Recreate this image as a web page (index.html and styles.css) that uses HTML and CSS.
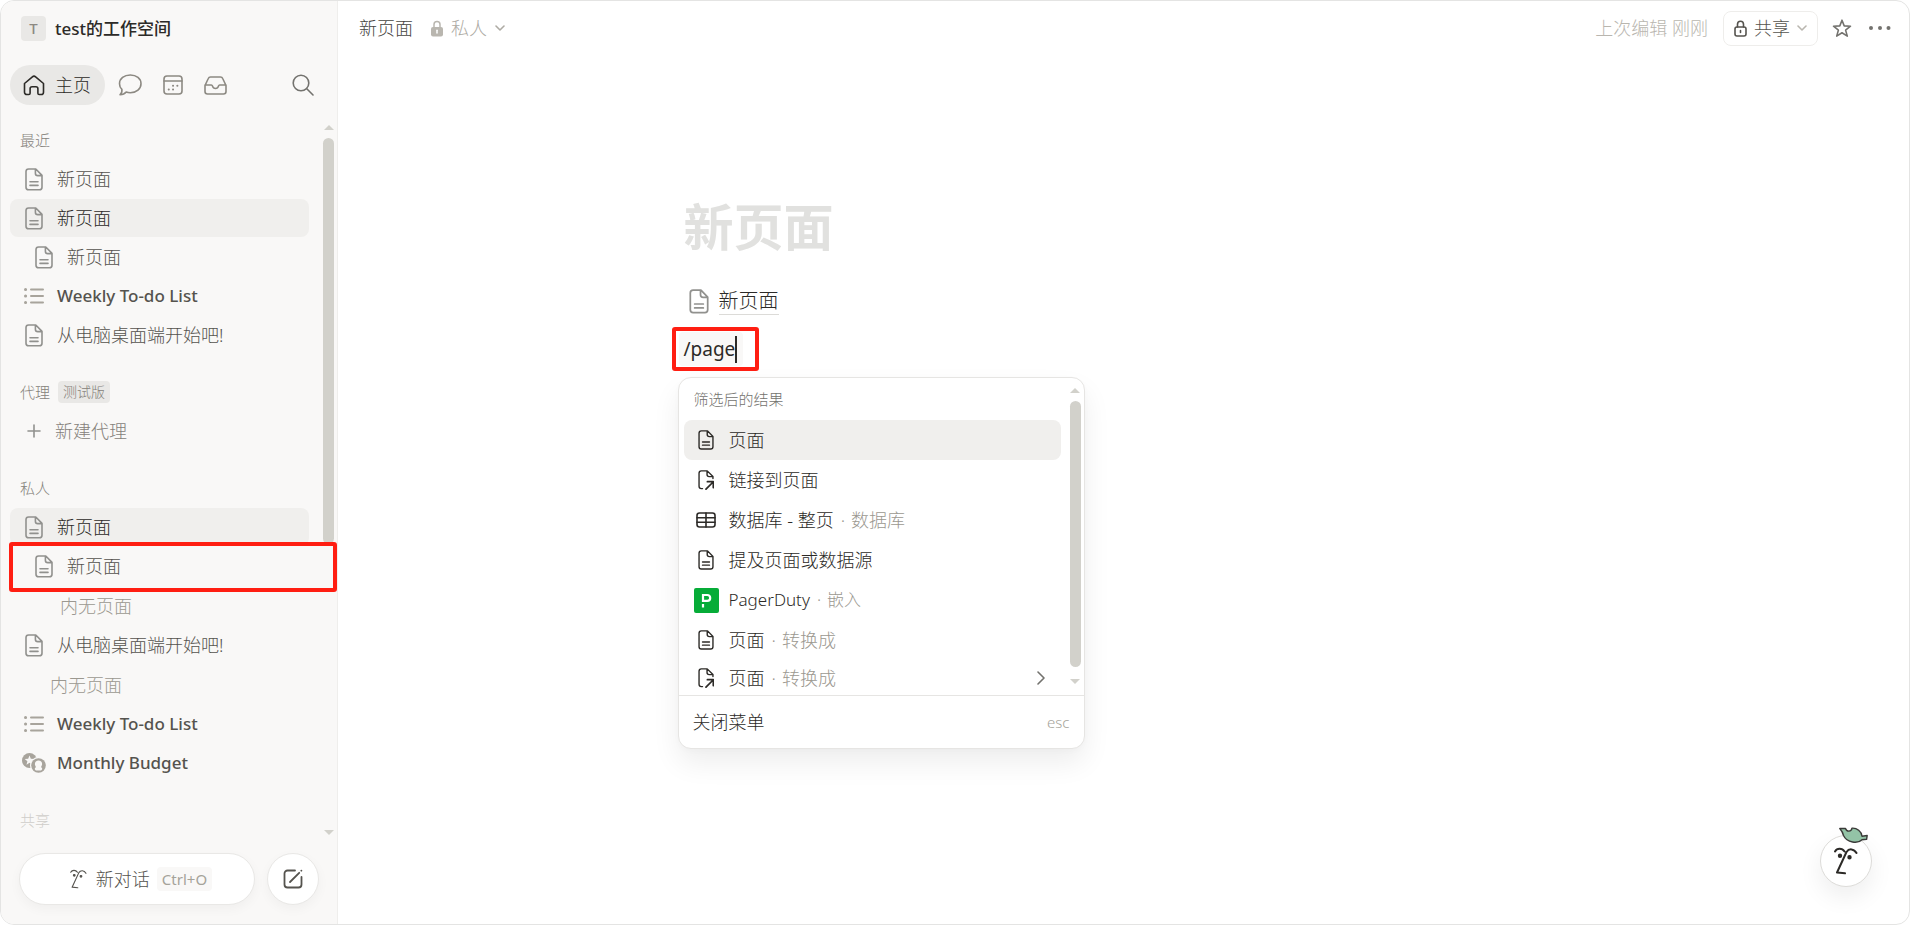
FILE: index.html
```html
<!DOCTYPE html>
<html lang="zh-CN">
<head>
    <meta charset="UTF-8">
    <meta name="viewport" content="width=device-width, initial-scale=1.0">
    <title>新页面</title>
    <link rel="stylesheet" href="styles.css">
</head>
<body>
    <!-- Shared icons -->
    <svg class="sprite" aria-hidden="true">
        <symbol id="icon-page" viewBox="0 0 18 23">
            <path d="M3.6 1h7.2L17 7.4v11.8a2.6 2.6 0 0 1-2.6 2.6H3.6A2.6 2.6 0 0 1 1 19.200V3.600A2.600 2.600 0 0 1 3.600 1zM10.400 1.200v4a2.400 2.400 0 0 0 2.400 2.400h4M5 13.800h8M5 17.400h8"/>
        </symbol>
        <symbol id="icon-link-page" viewBox="0 0 18 23">
            <path d="M5 21.400H3.600A2.600 2.600 0 0 1 1 18.800V3.600A2.600 2.600 0 0 1 3.600 1h6.800L17 7.600v2.200M10.200 1.200v4a2.400 2.400 0 0 0 2.400 2.400H17"/>
            <path d="M9 22l8.200-8.200M10.600 13.400h6.800v6.800" stroke-width="2"/>
        </symbol>
        <symbol id="icon-list" viewBox="0 0 20 16">
            <path d="M7 1.500h12M7 8h12M7 14.500h12"/>
            <path d="M1.500 1.500h.1M1.500 8h.1M1.500 14.500h.1" stroke-width="3"/>
        </symbol>
        <symbol id="icon-chevron" viewBox="0 0 10 6">
            <path d="M1 1l4 4 4-4"/>
        </symbol>
        <symbol id="icon-face" viewBox="0 0 24 28">
            <path d="M1 4.500C3 1 8 .8 10.500 4.500M22.500 6C20 1.500 15 1.200 12.500 5L3 25.500l8 .8"/>
            <circle cx="6" cy="8.800" r="1.200" fill="currentColor"/>
            <circle cx="15.500" cy="10.200" r="1.200" fill="currentColor"/>
        </symbol>
    </svg>

    <div class="app">
        <aside class="sidebar">
            <button class="workspace"><span class="workspace-logo">T</span>test的工作空间</button>

            <nav class="tabs">
                <a class="tab tab-active" href="#">
                    <svg class="icon" width="22" height="21" viewBox="0 0 22 21"><path d="M1.500 8.500L9.400 1.800a2.500 2.500 0 0 1 3.200 0l7.900 6.700v8.700a2.300 2.300 0 0 1-2.300 2.300h-2a1.300 1.300 0 0 1-1.300-1.300v-4.500a2 2 0 0 0-2-2h-3.800a2 2 0 0 0-2 2v4.500a1.300 1.300 0 0 1-1.300 1.300h-2a2.300 2.300 0 0 1-2.300-2.300z"/></svg>
                    主页
                </a>
                <a class="tab" href="#" aria-label="评论">
                    <svg class="icon" width="24" height="22" viewBox="0 0 24 22"><path d="M12.300 1C18.500 1 23 4.600 23 9.700s-4.500 9-10.700 9c-1.500 0-2.900-.2-4.100-.6-1.300 1.700-3.600 2.700-6.200 2.700 1.600-1.400 2.200-3.200 1.900-5.400C2.300 13.900 1.500 12 1.500 9.700 1.500 4.600 6.100 1 12.300 1z"/></svg>
                </a>
                <a class="tab" href="#" aria-label="日历">
                    <svg class="icon" width="20" height="20" viewBox="0 0 20 20"><rect x="1" y="1" width="18" height="18" rx="3"/><path d="M1 6h18"/><path d="M10 10.700h.1M14.300 10.700h.1M5.700 14.500h.1M10 14.500h.1" stroke-width="2"/></svg>
                </a>
                <a class="tab" href="#" aria-label="收件箱">
                    <svg class="icon" width="23" height="19" viewBox="0 0 23 19"><path d="M1 9.500L4.300 2.500A2.500 2.500 0 0 1 6.500 1h10a2.500 2.500 0 0 1 2.200 1.500L22 9.500v6a2.500 2.500 0 0 1-2.500 2.500h-16A2.500 2.500 0 0 1 1 15.500zM1 9h6.300c.7 0 1 .5 1.200 1.100.4 1.500 1.500 2.400 3 2.400s2.600-.9 3-2.400c.2-.6.500-1.100 1.200-1.100H22"/></svg>
                </a>
                <button class="search" aria-label="搜索">
                    <svg class="icon" width="22" height="22" viewBox="0 0 22 22"><circle cx="9" cy="9" r="7.800"/><path d="M14.800 14.800l6.200 6.200"/></svg>
                </button>
            </nav>

            <div class="scroller">
                <div class="sections">
                    <section class="section">
                        <h2 class="section-label">最近</h2>
                        <a class="row" href="#"><span class="slot"><svg class="icon" width="18" height="23"><use href="#icon-page"/></svg></span>新页面</a>
                        <a class="row row-active" href="#"><span class="slot"><svg class="icon" width="18" height="23"><use href="#icon-page"/></svg></span>新页面</a>
                        <a class="row row-nested" href="#"><span class="slot"><svg class="icon" width="18" height="23"><use href="#icon-page"/></svg></span>新页面</a>
                        <a class="row row-latin" href="#"><span class="slot"><svg class="icon icon-warm" width="20" height="16"><use href="#icon-list"/></svg></span>Weekly To-do List</a>
                        <a class="row" href="#"><span class="slot"><svg class="icon" width="18" height="23"><use href="#icon-page"/></svg></span>从电脑桌面端开始吧!</a>
                    </section>

                    <section class="section">
                        <h2 class="section-label">代理<span class="badge">测试版</span></h2>
                        <button class="row row-add"><span class="slot"><svg class="icon" width="14" height="14" viewBox="0 0 14 14"><path d="M7 1v12M1 7h12"/></svg></span>新建代理</button>
                    </section>

                    <section class="section">
                        <h2 class="section-label">私人</h2>
                        <a class="row row-active" href="#"><span class="slot"><svg class="icon" width="18" height="23"><use href="#icon-page"/></svg></span>新页面</a>
                        <a class="row row-nested row-marked" href="#"><span class="slot"><svg class="icon" width="18" height="23"><use href="#icon-page"/></svg></span>新页面</a>
                        <p class="empty empty-nested">内无页面</p>
                        <a class="row" href="#"><span class="slot"><svg class="icon" width="18" height="23"><use href="#icon-page"/></svg></span>从电脑桌面端开始吧!</a>
                        <p class="empty">内无页面</p>
                        <a class="row row-latin" href="#"><span class="slot"><svg class="icon icon-warm" width="20" height="16"><use href="#icon-list"/></svg></span>Weekly To-do List</a>
                        <a class="row row-latin" href="#">
                            <span class="slot">
                                <svg width="24" height="20" viewBox="0 0 24 20">
                                    <circle cx="7.500" cy="7.500" r="7.500" fill="#a8a49c"/>
                                    <path d="M7.500 2.500l1.300 3.300 3.500.2-2.700 2.200.9 3.500-3-1.900-3 1.900.9-3.500L2.700 6l3.500-.2z" fill="#f9f8f7"/>
                                    <circle cx="16.500" cy="12.500" r="8.500" fill="#f9f8f7"/>
                                    <circle cx="16.500" cy="12.500" r="7.300" fill="#a8a49c"/>
                                    <path d="M16.500 7.500a3.600 3.600 0 0 1 3.600 3.800c0 1.300-.9 1.900-.9 2.600s1 .8 1 1.800-1 1.800-1.800 1.800h-3.800c-.9 0-1.800-.8-1.800-1.800s1-1 1-1.800-.9-1.300-.9-2.600a3.600 3.600 0 0 1 3.600-3.800z" fill="#f9f8f7"/>
                                </svg>
                            </span>Monthly Budget
                        </a>
                    </section>

                    <section class="section">
                        <h2 class="section-label section-faded">共享</h2>
                    </section>
                </div>
                <div class="scrollbar" aria-hidden="true">
                    <span class="arrow-up"></span>
                    <span class="thumb"></span>
                    <span class="track"></span>
                    <span class="arrow-down"></span>
                </div>
            </div>

            <div class="sidebar-footer">
                <button class="chat"><svg class="icon" width="17" height="20"><use href="#icon-face"/></svg>新对话<kbd class="shortcut">Ctrl+O</kbd></button>
                <button class="compose" aria-label="新建页面">
                    <svg class="icon" width="20" height="20" viewBox="0 0 20 20"><path d="M12 1.500H4.500a3 3 0 0 0-3 3v11a3 3 0 0 0 3 3h11a3 3 0 0 0 3-3V8M7 13l9.200-9.200M18.300 1.700l.1-.1" stroke-width="1.800"/></svg>
                </button>
            </div>
        </aside>

        <main class="main">
            <header class="topbar">
                <a class="crumb" href="#">新页面</a>
                <button class="privacy">
                    <svg width="12" height="17" viewBox="0 0 12 17"><path d="M3 8V4.500a3 3 0 0 1 6 0V8" fill="none" stroke="#b9b6af" stroke-width="1.500"/><rect y="7" width="12" height="9.500" rx="2" fill="#b9b6af"/><path d="M6 10.300v2.700" stroke="#fff" stroke-width="1.500" stroke-linecap="round"/></svg>
                    私人
                    <svg class="icon" width="10" height="6"><use href="#icon-chevron"/></svg>
                </button>
                <span class="edited">上次编辑 刚刚</span>
                <button class="share">
                    <svg class="icon" width="13" height="17" viewBox="0 0 13 17"><path d="M3.500 7V4.300a3 3 0 0 1 6 0V7M6.500 10.500v2"/><rect x="1" y="7" width="11" height="9" rx="2"/></svg>
                    共享
                    <svg class="icon share-chevron" width="10" height="6"><use href="#icon-chevron"/></svg>
                </button>
                <button class="star" aria-label="收藏">
                    <svg class="icon" width="20" height="19" viewBox="0 0 20 19"><path d="M10 1.200l2.200 5.700 6.300.3-4.900 3.900 1.700 6L10 13.800l-5.300 3.300 1.700-6L1.500 7.200l6.300-.3z"/></svg>
                </button>
                <button class="more" aria-label="更多">
                    <svg width="22" height="4" viewBox="0 0 22 4" fill="#73726e"><circle cx="2" cy="2" r="2"/><circle cx="11" cy="2" r="2"/><circle cx="19.500" cy="2" r="2"/></svg>
                </button>
            </header>

            <article class="page">
                <h1 class="title">新页面</h1>
                <a class="subpage" href="#"><svg class="icon" width="20" height="25"><use href="#icon-page"/></svg><span class="subpage-name">新页面</span></a>
                <div class="command"><span class="command-text" contenteditable="true" spellcheck="false">/page</span><span class="caret"></span></div>

                <div class="menu">
                    <div class="menu-body">
                        <div class="menu-list">
                            <h2 class="menu-label">筛选后的结果</h2>
                            <button class="item item-active"><span class="item-icon"><svg class="icon" width="16" height="20"><use href="#icon-page"/></svg></span>页面</button>
                            <button class="item"><span class="item-icon"><svg class="icon" width="16" height="20"><use href="#icon-link-page"/></svg></span>链接到页面</button>
                            <button class="item">
                                <span class="item-icon"><svg class="icon" width="20" height="16" viewBox="0 0 20 16"><rect x="1" y="1" width="18" height="14" rx="2.500"/><path d="M1 5.700h18M1 10.300h18M10 1v14"/></svg></span>数据库 - 整页<span class="hint"><span>·</span>数据库</span>
                            </button>
                            <button class="item"><span class="item-icon"><svg class="icon" width="16" height="20"><use href="#icon-page"/></svg></span>提及页面或数据源</button>
                            <button class="item item-latin">
                                <span class="item-icon"><svg width="25" height="25" viewBox="0 0 25 25"><rect width="25" height="25" rx="2" fill="#06ac38"/><path d="M9 14V7h4.300a2.700 2.700 0 0 1 0 5.800H9M9 16v3.500" fill="none" stroke="#fff" stroke-width="2.200"/></svg></span>PagerDuty<span class="hint"><span>·</span>嵌入</span>
                            </button>
                            <button class="item"><span class="item-icon"><svg class="icon" width="16" height="20"><use href="#icon-page"/></svg></span>页面<span class="hint"><span>·</span>转换成</span></button>
                            <button class="item item-last">
                                <span class="item-icon"><svg class="icon" width="16" height="20"><use href="#icon-link-page"/></svg></span>页面<span class="hint"><span>·</span>转换成</span>
                                <svg class="icon item-more" width="8" height="14" viewBox="0 0 8 14"><path d="M1 1l6 6-6 6"/></svg>
                            </button>
                        </div>
                        <div class="scrollbar menu-scrollbar" aria-hidden="true">
                            <span class="arrow-up"></span>
                            <span class="thumb"></span>
                            <span class="arrow-down"></span>
                        </div>
                    </div>
                    <button class="menu-close">关闭菜单<kbd class="esc">esc</kbd></button>
                </div>
            </article>
        </main>
    </div>

    <button class="assistant" aria-label="助手">
        <svg class="icon" width="24" height="28"><use href="#icon-face"/></svg>
        <svg class="leaf" width="30" height="17" viewBox="0 0 30 17"><path d="M.8 1.500h5.700c1 3.500 6 3.500 6.500-.3 5-.4 9.500 3.300 10 8l5.200-.7-.600 3.800-4.600.4C19 17 8 16 4.500 8.500 4 6 2.500 3.500.8 1.500z" fill="#93c3a6" stroke="#3a3a38" stroke-width="1.400" stroke-linejoin="round"/></svg>
    </button>
</body>
</html>
```

FILE: styles.css
```css
* {
    box-sizing: border-box;
}
body {
    margin: 0;
    background: #fff;
    color: #2c2a27;
    font-family: "Noto Sans", "Noto Sans CJK SC", sans-serif;
    font-size: 18px;
    font-weight: 300;
    line-height: 24px;
}
button, kbd {
    font: inherit;
    color: inherit;
}
button {
    border: none;
    background: none;
    padding: 0;
    cursor: pointer;
    text-align: left;
}
a {
    color: inherit;
    text-decoration: none;
}
h1, h2, p {
    margin: 0;
}
svg {
    flex: none;
    display: block;
}
.sprite {
    position: absolute;
    width: 0;
    height: 0;
}
.icon {
    fill: none;
    stroke: currentColor;
    stroke-width: 1.6;
    stroke-linecap: round;
    stroke-linejoin: round;
}
.icon-warm {
    color: #a8a49c;
    stroke-width: 2;
}
.app {
    display: flex;
    height: 100vh;
    border: 1px solid #e4e4e3;
    border-radius: 14px;
    overflow: hidden;
}

/* Sidebar */
.sidebar {
    display: flex;
    flex-direction: column;
    flex: none;
    width: 337px;
    background: #f9f8f7;
    border-right: 1px solid #efeeec;
}
.workspace {
    display: flex;
    align-items: center;
    gap: 9px;
    padding: 15px 20px 14px;
    font-size: 17px;
    font-weight: 500;
}
.workspace-logo {
    width: 25px;
    height: 25px;
    border-radius: 4px;
    background: #e9e8e6;
    color: #8c8982;
    font-size: 15px;
    line-height: 25px;
    text-align: center;
}
.tabs {
    display: flex;
    align-items: center;
    gap: 21px;
    padding: 10px 23px 15px 9px;
    color: #8c8982;
}
.tab {
    display: flex;
    align-items: center;
}
.tab-active {
    gap: 10px;
    height: 40px;
    margin-right: -8px;
    padding: 0 14px 0 13px;
    border-radius: 20px;
    background: #e9e8e6;
    color: #2c2a27;
}
.search {
    margin-left: auto;
    color: #73726e;
}
.scroller {
    display: flex;
    flex: 1;
    min-height: 0;
}
.sections {
    display: flex;
    flex-direction: column;
    flex: 1;
    gap: 17px;
    min-width: 0;
    padding: 0 14px 0 9px;
}
.section-label {
    display: flex;
    align-items: center;
    gap: 8px;
    height: 40px;
    padding-left: 10px;
    color: #85827b;
    font-size: 15px;
    font-weight: 300;
}
.section-faded {
    color: #cfcdc9;
}
.badge {
    padding: 0 5px;
    border-radius: 4px;
    background: #e9e8e6;
    font-size: 14px;
    line-height: 22px;
}
.row {
    position: relative;
    display: flex;
    align-items: center;
    gap: 11px;
    width: 100%;
    height: 38px;
    margin-bottom: 1px;
    padding-left: 12px;
    border-radius: 8px;
    color: #55534e;
}
.row:hover, .row-active {
    background: #f0efed;
}
.row-active {
    color: #2c2a27;
}
.row-nested {
    padding-left: 22px;
}
.row-latin {
    font-size: 17px;
    font-weight: 500;
}
.row-add {
    gap: 9px;
    color: #85827b;
}
.row .icon {
    color: #91918e;
}
.row .icon-warm {
    color: #a8a49c;
}
/* Red marker drawn around the new page */
.row-marked::after {
    content: "";
    position: absolute;
    inset: -5px -28px -7px -1px;
    border: 4px solid #ff1e12;
    border-radius: 3px;
    z-index: 1;
}
.slot {
    display: flex;
    justify-content: center;
    flex: none;
    width: 24px;
}
.empty {
    padding-left: 40px;
    color: #9b9890;
    line-height: 40px;
}
.empty-nested {
    padding-left: 50px;
}
.scrollbar {
    display: flex;
    flex-direction: column;
    align-items: center;
    flex: none;
    gap: 8px;
    width: 11px;
    margin-right: 3px;
    padding: 5px 0;
}
.arrow-up, .arrow-down {
    border: 5px solid transparent;
}
.arrow-up {
    border-top: none;
    border-bottom-color: #d2d1cb;
}
.arrow-down {
    border-bottom: none;
    border-top-color: #d2d1cb;
}
.thumb {
    flex: 3;
    width: 11px;
    border-radius: 6px;
    background: #d2d1cb;
}
.track {
    flex: 2;
}
.sidebar-footer {
    display: flex;
    gap: 12px;
    padding: 13px 18px 19px 18px;
}
.chat, .compose {
    display: flex;
    align-items: center;
    justify-content: center;
    height: 52px;
    border: 1px solid #e9e8e6;
    border-radius: 26px;
    background: #fff;
    box-shadow: 0 4px 12px rgba(0, 0, 0, 0.04);
    color: #55534e;
}
.chat {
    flex: 1;
    gap: 9px;
    padding-left: 8px;
}
.compose {
    width: 52px;
}
.shortcut {
    margin-left: -2px;
    padding: 0 5px;
    border-radius: 4px;
    background: #f9f8f7;
    color: #a5a39a;
    font-size: 15px;
    font-weight: 400;
}

/* Top bar */
.main {
    flex: 1;
    min-width: 0;
}
.topbar {
    display: flex;
    align-items: center;
    height: 54px;
    padding: 0 18px 0 21px;
}
.crumb {
    color: #46443f;
}
.privacy {
    display: flex;
    align-items: center;
    gap: 8px;
    margin-left: 18px;
    color: #aeaba4;
}
.edited {
    margin-left: auto;
    color: #b9b6af;
}
.share {
    display: flex;
    align-items: center;
    gap: 7px;
    height: 35px;
    margin-left: 15px;
    padding: 0 10px;
    border: 1px solid #eeedeb;
    border-radius: 8px;
    color: #55534e;
}
.share-chevron {
    color: #b9b6af;
}
.star {
    margin: 0 17px 0 14px;
    color: #73726e;
}

/* Page */
.page {
    max-width: 880px;
    margin: 0 auto;
    padding-top: 136px;
}
.title {
    color: #e1e1df;
    font-size: 50px;
    font-weight: 700;
    line-height: 72px;
}
.subpage {
    display: flex;
    align-items: center;
    gap: 10px;
    width: fit-content;
    margin-top: 24px;
    padding-left: 5px;
    font-size: 20px;
    line-height: 38px;
}
.subpage .icon {
    color: #91918e;
}
.subpage-name {
    border-bottom: 1px solid #dcdbd8;
    line-height: 27px;
}
.command {
    position: relative;
    display: flex;
    align-items: center;
    width: 64px;
    height: 34px;
    margin: 17px 0 0 -5px;
    padding-left: 5px;
    border-radius: 4px;
    background: #f9f8f7;
    font-size: 19px;
    font-weight: 400;
}
.command-text {
    outline: none;
}
.caret {
    width: 2px;
    height: 27px;
    background: #2c2a27;
}
/* Red marker drawn around the typed command */
.command::after {
    content: "";
    position: absolute;
    inset: -5px -16px -5px -7px;
    border: 4px solid #ff1e12;
    border-radius: 3px;
    pointer-events: none;
}

/* Slash menu */
.menu {
    width: 407px;
    margin: 11px 0 0 -6px;
    border: 1px solid #e6e5e3;
    border-radius: 13px;
    background: #fff;
    box-shadow: 0 14px 28px rgba(0, 0, 0, 0.07), 0 2px 6px rgba(0, 0, 0, 0.02);
}
.menu-body {
    display: flex;
    border-bottom: 1px solid #e6e5e3;
}
.menu-list {
    flex: 1;
    padding: 0 9px 0 5px;
}
.menu-label {
    padding: 9px 10px;
    color: #73726e;
    font-size: 15px;
    font-weight: 300;
}
.item {
    display: flex;
    align-items: center;
    width: 100%;
    height: 40px;
    padding: 0 16px 0 10px;
    border-radius: 8px;
}
.item:hover, .item-active {
    background: #f0efed;
}
.item-latin {
    font-size: 17px;
}
.item-last {
    height: 35px;
}
.item-icon {
    display: flex;
    justify-content: center;
    width: 25px;
    margin-right: 10px;
}
.hint {
    display: flex;
    gap: 6px;
    margin-left: 7px;
    color: #9b9890;
}
.item-more {
    margin-left: auto;
    color: #73726e;
}
.menu-scrollbar {
    padding: 10px 0 11px;
}
.menu-scrollbar .arrow-down {
    margin-top: 4px;
}
.menu-close {
    display: flex;
    align-items: center;
    justify-content: space-between;
    width: 100%;
    height: 52px;
    padding: 0 14px;
}
.esc {
    color: #a5a39a;
    font-size: 15px;
}

/* Floating assistant */
.assistant {
    position: fixed;
    right: 38px;
    bottom: 38px;
    display: flex;
    align-items: center;
    justify-content: center;
    width: 52px;
    height: 52px;
    border: 1px solid #dcdbd8;
    border-radius: 50%;
    background: #fff;
    box-shadow: 0 10px 24px rgba(0, 0, 0, 0.07);
    color: #2c2a27;
}
.assistant .icon {
    stroke-width: 2;
}
.leaf {
    position: absolute;
    top: -9px;
    left: 18px;
}
```
